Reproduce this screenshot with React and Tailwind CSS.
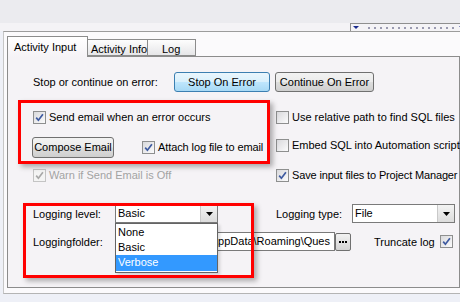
import React from "react";

// Vista-style checkbox
const Check = ({ checked, disabled }) => (
  <span
    className={
      disabled
        ? "w-[13px] h-[13px] shrink-0 border border-[#c4c4c4] bg-[#f4f4f4] flex items-center justify-center"
        : "w-[13px] h-[13px] shrink-0 border border-[#8e8f8f] bg-[linear-gradient(135deg,#d9d9dc,#fbfbfc)] flex items-center justify-center"
    }
  >
    {checked && (
      <svg width="9" height="9" viewBox="0 0 9 9">
        <path
          d="M1.2 4.6 L3.4 7.2 L7.9 1.2"
          fill="none"
          stroke={disabled ? "#a8a8a8" : "#3e5aa0"}
          strokeWidth="1.7"
        />
      </svg>
    )}
  </span>
);

const Arrow = () => (
  <span className="w-[17px] h-full shrink-0 border-l border-[#c9c9c9] bg-[linear-gradient(#f3f3f3,#dcdcdc)] flex items-center justify-center">
    <svg width="7" height="4" viewBox="0 0 7 4">
      <path d="M0 0 H7 L3.5 4 Z" fill="#000" />
    </svg>
  </span>
);

const dots = Array.from({ length: 15 });

export default function App() {
  return (
    <div className="w-[460px] h-[302px] overflow-hidden relative bg-[#eef0f7] text-[11px] leading-none text-black font-['Liberation_Sans',Arial,sans-serif]">
      {/* top bands */}
      <div className="h-[23px] bg-[#ebebef]" />
      <div className="h-[8px] bg-[#f4f3f6] flex justify-end">
        <div className="w-[110px] h-[8px] border-l border-t border-[#8f8f8f] flex items-center pl-[2px] gap-[3px]">
          <svg width="6" height="3" viewBox="0 0 6 3" className="shrink-0">
            <path d="M0 0 H6 L3 3 Z" fill="#1a2a8c" />
          </svg>
          <div className="flex gap-[4px] ml-[6px]">
            {dots.map((_, i) => (
              <span key={i} className="w-[2px] h-[2px] bg-[#9a9ab0]" />
            ))}
          </div>
          <svg width="6" height="3" viewBox="0 0 6 3" className="shrink-0 ml-[2px]">
            <path d="M0 0 H6 L3 3 Z" fill="#1a2a8c" />
          </svg>
        </div>
      </div>

      {/* outer frame */}
      <div className="ml-[3px] h-[263px] border-t border-l border-b border-t-[#9c9c9c] border-l-[#c6c6c6] border-b-[#b4b4b4] bg-[#fbfafc] pt-[4px] pl-[3px]">
        {/* tabs */}
        <div className="h-[20px] flex items-end whitespace-nowrap">
          <div className="relative z-10 w-[81px] h-[21px] -mb-[1px] border border-b-0 border-[#8c8c8c] bg-[linear-gradient(#ffffff,#f5f3f6)] pl-[6px] pt-[5px]">
            Activity Input
          </div>
          <div className="w-[60px] h-[17px] border border-l-0 border-[#8c8c8c] bg-[linear-gradient(#fdfdfd,#e6e6e8)] pl-[3px] pt-[4px]">
            Activity Info
          </div>
          <div className="w-[48px] h-[17px] border border-l-0 border-[#8c8c8c] bg-[linear-gradient(#fdfdfd,#e6e6e8)] pl-[14px] pt-[4px]">
            Log
          </div>
        </div>

        {/* panel */}
        <div className="h-[232px] border border-[#8c8c8c] bg-[#f5f3f6] pl-[25px] pt-[15px]">
          <div className="flex items-center h-[20px]">
            <span className="w-[141px]">Stop or continue on error:</span>
            <button className="w-[96px] h-[20px] rounded-[3px] border border-[#3c7fb1] bg-[linear-gradient(#eaf6fd_0%,#d9f0fc_48%,#bee6fd_52%,#a7d9f5_100%)]">
              Stop On Error
            </button>
            <button className="ml-[5px] w-[99px] h-[20px] rounded-[3px] border border-[#707070] bg-[linear-gradient(#f2f2f2_0%,#ebebeb_48%,#dddddd_52%,#cfcfcf_100%)]">
              Continue On Error
            </button>
          </div>

          <div className="mt-[15px] grid grid-cols-[243px_1fr] grid-rows-[20px_22px_20px] gap-y-[9px] whitespace-nowrap">
            <div className="flex items-center gap-[3px]">
              <Check checked />
              <span>Send email when an error occurs</span>
            </div>
            <div className="flex items-center gap-[3px]">
              <Check />
              <span>Use relative path to find SQL files</span>
            </div>

            <div className="flex items-center">
              <button className="-ml-[1px] w-[82px] h-[21px] rounded-[3px] border border-[#707070] bg-[linear-gradient(#f2f2f2_0%,#ebebeb_48%,#dddddd_52%,#cfcfcf_100%)]">
                Compose Email
              </button>
              <span className="ml-[28px] flex items-center gap-[3px] tracking-[-0.1px]">
                <Check checked />
                <span>Attach log file to email</span>
              </span>
            </div>
            <div className="flex items-center gap-[3px] -mt-[3px]">
              <Check />
              <span>Embed SQL into Automation script</span>
            </div>

            <div className="flex items-center gap-[3px] -mt-[4px] text-[#a3a3a3]">
              <Check checked disabled />
              <span>Warn if Send Email is Off</span>
            </div>
            <div className="flex items-center gap-[3px] -mt-[4px] tracking-[-0.15px]">
              <Check checked />
              <span>Save input files to Project Manager</span>
            </div>
          </div>

          {/* logging */}
          <div className="mt-[17px] flex items-center h-[19px]">
            <span className="w-[82px] pt-[2px]">Logging level:</span>
            <div className="relative w-[103px] h-[19px] z-10">
              <div className="w-full h-full border border-[#7a7a7a] bg-white flex">
                <span className="flex-1 pl-[2px] pt-[3px]">Basic</span>
                <Arrow />
              </div>
              <div className="absolute left-0 top-full w-full border border-[#646464] bg-white py-[1px] shadow-[2px_2px_3px_rgba(0,0,0,0.15)]">
                <div className="h-[15px] pl-[2px] pt-[2px]">None</div>
                <div className="h-[15px] pl-[2px] pt-[2px]">Basic</div>
                <div className="h-[16px] pl-[2px] pt-[2px] bg-[#3399ff] text-white">Verbose</div>
              </div>
            </div>
            <span className="ml-[58px] w-[76px] pt-[2px]">Logging type:</span>
            <div className="w-[103px] h-[19px] border border-[#7a7a7a] bg-white flex">
              <span className="flex-1 pl-[2px] pt-[3px]">File</span>
              <Arrow />
            </div>
          </div>

          <div className="mt-[9px] flex items-center h-[19px]">
            <span className="w-[82px] pt-[1px]">Loggingfolder:</span>
            <div className="w-[220px] h-[19px] border border-[#7a7a7a] bg-white flex justify-end items-center overflow-hidden whitespace-nowrap pr-[4px]">
              C:\Users\Administrator\AppData\Roaming\Ques
            </div>
            <button className="w-[16px] h-[18px] rounded-[2px] border border-[#707070] bg-[linear-gradient(#f2f2f2,#d4d4d4)] flex items-center justify-center gap-[1px]">
              <span className="w-[2px] h-[2px] bg-black" />
              <span className="w-[2px] h-[2px] bg-black" />
              <span className="w-[2px] h-[2px] bg-black" />
            </button>
            <span className="ml-[23px] w-[66px] pt-[1px]">Truncate log</span>
            <Check checked />
          </div>
        </div>
      </div>

      {/* red annotation boxes */}
      <div className="absolute z-20 left-[18px] top-[100px] w-[252px] h-[64px] border-[3px] border-[#ff0000] shadow-[3px_3px_5px_rgba(0,0,0,0.3)] pointer-events-none" />
      <div className="absolute z-20 left-[23px] top-[203px] w-[231px] h-[75px] border-[3px] border-[#ff0000] shadow-[3px_3px_5px_rgba(0,0,0,0.3)] pointer-events-none" />
    </div>
  );
}
